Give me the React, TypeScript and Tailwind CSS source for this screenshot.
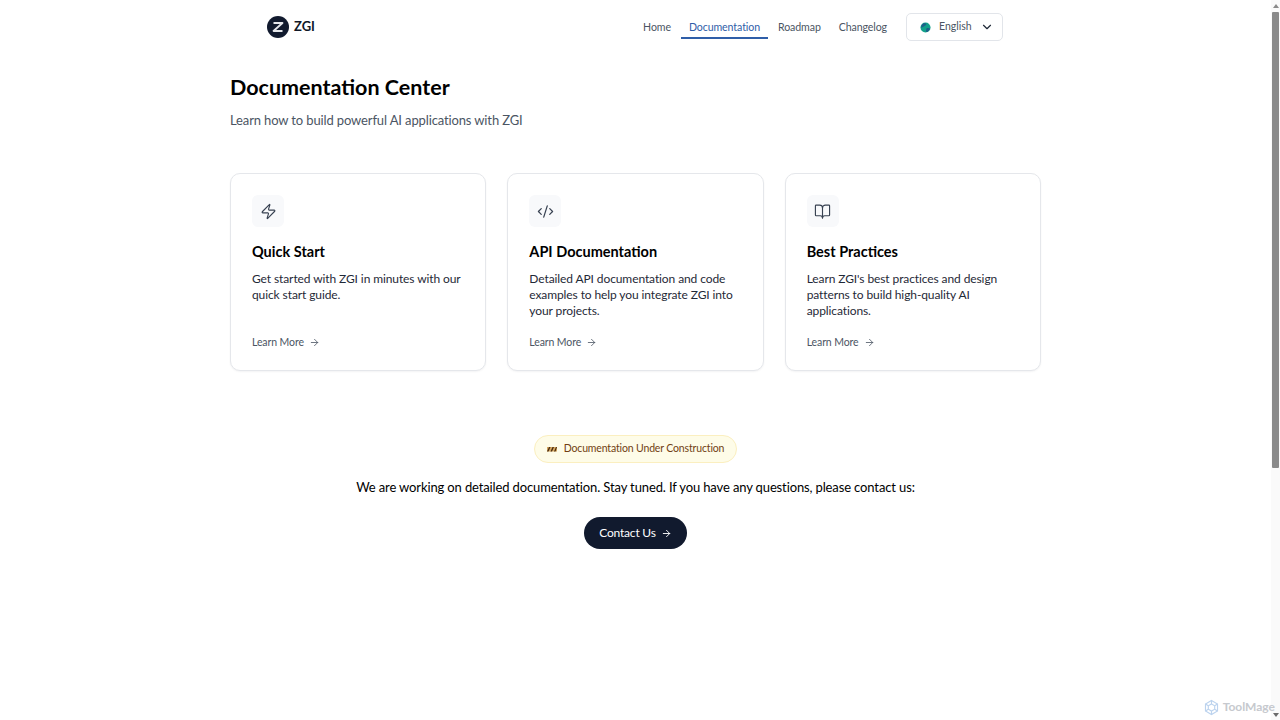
import { ArrowRight, BookOpen, ChevronDown, CodeXml, Zap } from "lucide-react";

const navItems = ["Home", "Documentation", "Roadmap", "Changelog"];

const cards = [
  {
    title: "Quick Start",
    text: "Get started with ZGI in minutes with our quick start guide.",
    icon: <Zap className="h-[17px] w-[17px]" strokeWidth={1.6} />,
  },
  {
    title: "API Documentation",
    text: "Detailed API documentation and code examples to help you integrate ZGI into your projects.",
    icon: <CodeXml className="h-[17px] w-[17px]" strokeWidth={1.75} />,
  },
  {
    title: "Best Practices",
    text: "Learn ZGI's best practices and design patterns to build high-quality AI applications.",
    icon: <BookOpen className="h-[17px] w-[17px]" strokeWidth={1.6} />,
  },
];

function Logo() {
  return (
    <div className="flex items-center gap-[5px]">
      <div className="flex h-[22px] w-[22px] items-center justify-center rounded-full bg-[#111a2e]">
        <svg viewBox="0 0 22 22" className="h-[22px] w-[22px]" fill="none">
          <path d="M6.500 7h9L6.500 15h9" stroke="#e5e7eb" strokeWidth="1.8" strokeLinejoin="round" />
        </svg>
      </div>
      <span className="text-[13px] font-bold text-[#111827]">ZGI</span>
    </div>
  );
}

function Globe() {
  return (
    <svg viewBox="0 0 12 12" className="h-[11px] w-[11px]">
      <circle cx="6" cy="6" r="5.500" fill="#12a08a" />
      <path d="M2 3c2-2 4-2 5-1 0 2-2 2-3 3S2 6 1 6zM7 7c2-1 3 0 4 0-1 2-2 4-4 4-1-1 0-3 0-4z" fill="#1e5f8a" />
    </svg>
  );
}

function Header() {
  return (
    <header className="ml-[267px] flex h-[54px] w-[736px] items-center justify-between">
      <Logo />
      <div className="flex items-center">
        <nav className="flex items-center gap-[2px] text-[10.6px] tracking-[-0.1px]">
          {navItems.map((item) => {
            const active = item === "Documentation";
            return (
              <a
                key={item}
                className={
                  active
                    ? "mt-[2px] border-b-2 border-[#2f5ea8] px-2 pb-[2px] pt-[3px] text-[#2f5ea8]"
                    : "mt-[2px] border-b-2 border-transparent px-2 pb-[2px] pt-[3px] text-[#4b5563]"
                }
              >
                {item}
              </a>
            );
          })}
        </nav>
        <button
          type="button"
          className="ml-[11px] flex h-[28px] w-[97px] items-center rounded-[5px] border border-[#e2e5ea] pl-[13px] pr-[8px] text-[10.5px] text-[#4b5563]"
        >
          <Globe />
          <span className="ml-[8px]">English</span>
          <ChevronDown className="ml-auto h-[14px] w-[14px] text-[#1f2937]" strokeWidth={2} />
        </button>
      </div>
    </header>
  );
}

function Card({ title, text, icon }: { title: string; text: string; icon: React.ReactNode }) {
  return (
    <div className="flex h-[198px] flex-col rounded-[10px] border border-[#e5e7eb] bg-white px-[21px] pt-[21px] shadow-[0_1px_2px_rgba(15,23,42,0.05)]">
      <div className="flex h-8 w-8 items-center justify-center rounded-md bg-[#f8f9fb] text-[#374151]">
        {icon}
      </div>
      <h2 className="mt-[15px] text-[14.5px] font-bold leading-[20px] text-black">{title}</h2>
      <p className="mt-[9px] text-[12px] leading-[16px] tracking-[-0.1px] text-[#1f2937]">{text}</p>
      <a className="mt-auto mb-[20px] flex items-center gap-[5px] text-[10.5px] leading-[16px] tracking-[-0.1px] text-[#4b5563]">
        Learn More
        <ArrowRight className="h-[11px] w-[11px]" strokeWidth={1.75} />
      </a>
    </div>
  );
}

export default function App() {
  return (
    <div className="relative flex h-screen overflow-hidden bg-white font-['Lato',sans-serif]">
      <main className="min-w-0 flex-1">
        <Header />
        <div className="mx-auto w-[811px]">
          <h1 className="mt-[17px] text-[21.5px] font-bold leading-[32px] text-black">Documentation Center</h1>
          <p className="mt-[7px] text-[13px] leading-[20px] tracking-[-0.13px] text-[#4b5563]">
            Learn how to build powerful AI applications with ZGI
          </p>
          <div className="mt-[43px] grid grid-cols-3 gap-[21px]">
            {cards.map((c) => (
              <Card key={c.title} {...c} />
            ))}
          </div>
          <div className="mt-[64px] flex flex-col items-center">
            <div className="flex h-[28px] items-center gap-[7px] rounded-full border border-[#fbefc0] bg-[#fefce8] px-[11.5px] text-[10.5px] tracking-[-0.15px] text-[#713f12]">
              <svg viewBox="0 0 10 7" className="h-[7px] w-[10px]">
                <rect y="1" width="10" height="4.500" fill="#d6a860" />
                <path d="M0 5.500 2 1h1.500l-2 4.500zM3.500 5.500 5.500 1H7L5 5.500zM7 5.500 9 1h1L8.500 5.500z" fill="#4a2c10" />
              </svg>
              Documentation Under Construction
            </div>
            <p className="mt-[14px] text-[13px] leading-[20px] tracking-[-0.13px] text-black">
              We are working on detailed documentation. Stay tuned. If you have any questions, please contact us:
            </p>
            <button
              type="button"
              className="mt-[20px] flex h-[32px] items-center gap-[5px] rounded-full bg-[#111a2e] px-[15.5px] text-[12px] tracking-[-0.2px] text-white"
            >
              Contact Us
              <ArrowRight className="h-[11px] w-[11px]" strokeWidth={2} />
            </button>
          </div>
        </div>
      </main>

      {/* scrollbar */}
      <div className="flex w-[9px] flex-col items-center bg-[#fafafa]">
        <div className="mt-[4px] h-0 w-0 border-x-[3px] border-b-[4px] border-x-transparent border-b-[#8a8a8a]" />
        <div className="mt-[4px] h-[456px] w-[7px] rounded-[1px] bg-[#8a8a8a]" />
        <div className="mb-[3px] mt-auto h-0 w-0 border-x-[3px] border-t-[4px] border-x-transparent border-t-[#6b6b6b]" />
      </div>

      {/* watermark */}
      <div className="absolute bottom-[4px] right-[5px] flex items-center gap-[3px] text-[12px] font-bold text-[#c6c9ce]">
        <svg viewBox="0 0 24 24" className="h-[17px] w-[17px]" fill="none" stroke="#bcd3ee" strokeWidth="1.6">
          <path d="M12 2l8.500 5v10L12 22l-8.500-5V7z" />
          <path d="M12 7l4.500 2.500v5L12 17l-4.500-2.500v-5z" />
          <path d="M12 2v5M20.500 7l-4 2.500M20.500 17l-4-2.500M12 22v-5M3.500 17l4-2.500M3.500 7l4 2.500" />
        </svg>
        ToolMage
      </div>
    </div>
  );
}
